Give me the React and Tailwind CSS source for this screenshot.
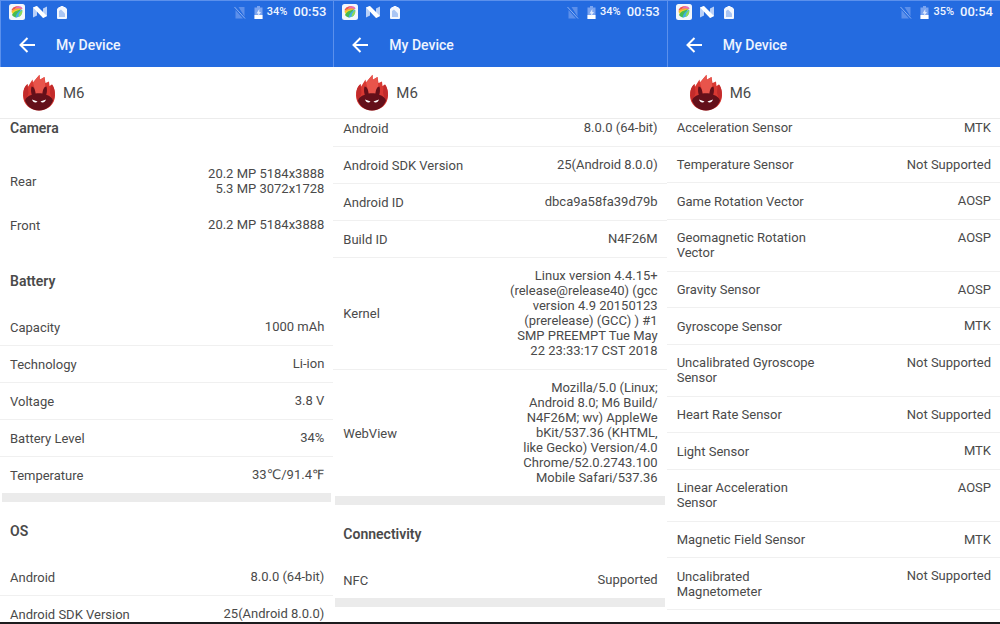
import React from 'react';

const kernel = `Linux version 4.4.15+
(release@release40) (gcc
version 4.9 20150123
(prerelease) (GCC) ) #1
SMP PREEMPT Tue May
22 23:33:17 CST 2018`;

const webView = `Mozilla/5.0 (Linux;
Android 8.0; M6 Build/
N4F26M; wv) AppleWe
bKit/537.36 (KHTML,
like Gecko) Version/4.0
Chrome/52.0.2743.100
Mobile Safari/537.36`;

const screens = [
    {
        id: 'battery',
        battery: '34%',
        time: '00:53',
        cutOff: true,
        sections: [
            {
                title: 'Camera',
                plain: true,
                rows: [
                    ['Rear', '20.2 MP 5184x3888\n5.3 MP 3072x1728'],
                    ['Front', '20.2 MP 5184x3888'],
                ],
            },
            {
                title: 'Battery',
                rows: [
                    ['Capacity', '1000 mAh'],
                    ['Technology', 'Li-ion'],
                    ['Voltage', '3.8 V'],
                    ['Battery Level', '34%'],
                    ['Temperature', '33℃/91.4℉'],
                ],
            },
            {
                title: 'OS',
                rows: [
                    ['Android', '8.0.0 (64-bit)'],
                    ['Android SDK Version', '25(Android 8.0.0)'],
                ],
            },
        ],
    },
    {
        id: 'os',
        battery: '34%',
        time: '00:53',
        sections: [
            {
                rows: [
                    ['Android', '8.0.0 (64-bit)'],
                    ['Android SDK Version', '25(Android 8.0.0)'],
                    ['Android ID', 'dbca9a58fa39d79b'],
                    ['Build ID', 'N4F26M'],
                    ['Kernel', kernel],
                    ['WebView', webView],
                ],
            },
            {
                title: 'Connectivity',
                rows: [['NFC', 'Supported']],
            },
        ],
    },
    {
        id: 'sensors',
        battery: '35%',
        time: '00:54',
        sections: [
            {
                open: true,
                rows: [
                    ['Acceleration Sensor', 'MTK'],
                    ['Temperature Sensor', 'Not Supported'],
                    ['Game Rotation Vector', 'AOSP'],
                    ['Geomagnetic Rotation Vector', 'AOSP'],
                    ['Gravity Sensor', 'AOSP'],
                    ['Gyroscope Sensor', 'MTK'],
                    ['Uncalibrated Gyroscope Sensor', 'Not Supported'],
                    ['Heart Rate Sensor', 'Not Supported'],
                    ['Light Sensor', 'MTK'],
                    ['Linear Acceleration Sensor', 'AOSP'],
                    ['Magnetic Field Sensor', 'MTK'],
                    ['Uncalibrated Magnetometer', 'Not Supported'],
                ],
            },
        ],
    },
];

function GalleryIcon() {
    return (
        <svg viewBox="0 0 16 16" className="size-4" aria-hidden="true">
            <rect width="16" height="16" rx="2.5" fill="#f4f7fb" />
            <path d="M2.500 6.500C3 3 7.500 1.500 10.500 2.500L8 5z" fill="#f0524a" />
            <path d="M6 4.500C8 2 11 1.500 13 3.500L13.500 5 7 6.500z" fill="#e86fb8" />
            <path d="M2.500 7.500C4 4.500 9 3.500 13 5L4 9z" fill="#f7a234" />
            <path d="M2.500 8C5 6 9 5.500 12 5.500L4.500 11z" fill="#f6d32e" />
            <path d="M3 11c1-3 5-5 9-5.500L7.500 13.500C5.500 13.500 4 12.500 3 11z" fill="#46bb52" />
            <path d="M6.500 13.500C7 10 9.500 7 13 5.500c.8 3.500-1 8-6.500 8z" fill="#3fb0e4" />
            <path d="M9.500 13C9.500 10 11 7.500 13.300 6c.5 3-.8 6-3.800 7z" fill="#8edb5a" />
        </svg>
    );
}

function NougatIcon() {
    return (
        <svg viewBox="0 0 14 12" className="h-3 w-3.5" aria-hidden="true">
            <path d="M0 1.500L4 0v9.500L0 11.500z" fill="#b9d0f8" />
            <path d="M10 2.500L14 .5V10l-4 2z" fill="#b9d0f8" />
            <path d="M0 1.500L4 0l10 10-4 2z" fill="#fff" />
        </svg>
    );
}

function SimCardIcon() {
    return (
        <svg viewBox="0 0 10 13" className="h-[13px] w-2.5" aria-hidden="true">
            <path d="M2 1h1.500V0h3v1H8l2 2v9a1 1 0 01-1 1H1a1 1 0 01-1-1V3z" fill="#f2f6fe" />
            <path d="M2 5L4 3.500 8 7.500V11H2z" fill="#a9c5f4" />
        </svg>
    );
}

function NoSimIcon() {
    return (
        <svg viewBox="0 0 12 13" className="h-[13px] w-3" aria-hidden="true">
            <path d="M4.500 1H10.500v9.500zM1.500 4v8.500H9z" fill="#5c8fea" />
            <path d="M.5 1L11 12.500" stroke="#8fb2f1" strokeWidth="1" />
        </svg>
    );
}

function BatteryIcon() {
    return (
        <svg viewBox="0 0 9 13" className="h-[13px] w-[9px]" aria-hidden="true">
            <path d="M3 0h3v1.500h2.500V13H.5V1.500H3z" fill="#7ba4f0" />
            <path d="M.5 9h8v4h-8z" fill="#fff" />
            <path d="M5.300 3L2.500 7.500h1.700v2.500l2.800-4H5.300z" fill="#dce8fd" />
        </svg>
    );
}

function BackIcon() {
    return (
        <svg viewBox="0 0 16 16" className="size-4" fill="none" stroke="#fff" strokeWidth="2" aria-hidden="true">
            <path d="M8.500 1L1.500 8l7 7M1.500 8H16" />
        </svg>
    );
}

function AntutuLogo() {
    return (
        <svg viewBox="0 0 34 37" className="h-[37px] w-[34px]" aria-hidden="true">
            <path
                d="M17 36.500C8 36.500 1 30 1 21.500 1 16.500 2.500 12.500 5.500 10l.3 3L10.500 5.500l.5 3L17.500.8l.3 5L22.500 3l1 6L27 7.500l.5 4.500 2.500-1.500c2 3 3 6.500 3 11 0 8.500-7 15-16 15z"
                fill="#d93832"
            />
            <path d="M11 8.500L17.500.8l.3 5L22.500 3l.8 10L20 20h-6z" fill="#e8544b" />
            <path d="M5.500 10l1 9-3 9C.5 22 .2 14.500 5.500 10zM28.500 12l1.500-1.500c3.500 4.500 4 12 .5 17.500L28 19z" fill="#c32b2b" />
            <path
                d="M9.500 12.500c2.500 0 3.800 3.500 4 7 2.200-.4 4.800-.4 7 0 .2-3.500 1.500-7 4-7 .8 3 .5 6-.3 8.200 3.800 1.300 6.300 3.300 6.800 6-2.200 5.800-7.500 9.800-14 9.800S5.200 32.500 3 26.700c.5-2.700 3-4.700 6.800-6-.8-2.200-1.100-5.200-.3-8.200z"
                fill="#64101a"
            />
            <path d="M10 25.500l5.500 2c-1.300 1.700-4.500 1.500-5.500-2zM24 25.500l-5.500 2c1.300 1.700 4.500 1.500 5.500-2z" fill="#fff" />
        </svg>
    );
}

function StatusBar({ battery, time }) {
    return (
        <div className="flex h-[22px] items-center pl-2 pr-[7px]">
            <div className="flex items-center gap-2">
                <GalleryIcon />
                <NougatIcon />
                <span className="ml-0.5 flex">
                    <SimCardIcon />
                </span>
            </div>
            <div className="ml-auto flex items-center font-medium text-[#f0f5ff]">
                <NoSimIcon />
                <span className="ml-2 flex">
                    <BatteryIcon />
                </span>
                <span className="ml-1 text-[11px]">{battery}</span>
                <span className="ml-1.5 text-[13px]">{time}</span>
            </div>
        </div>
    );
}

function Row({ label, value, top, cut, line }) {
    return (
        <div
            className={`flex grow justify-between pl-2.5 pr-[9px] leading-[15px] ${top ? 'pt-px' : 'pt-2.5'} ${cut ? '' : 'pb-2.5'} ${line ? 'border-b border-[#f0f0f0]' : ''}`}
        >
            <dt className="max-w-[140px] self-center">{label}</dt>
            <dd className="whitespace-pre text-right">{value}</dd>
        </div>
    );
}

function DeviceScreen({ screen }) {
    const lastSection = screen.sections.length - 1;

    return (
        <article className="flex min-w-0 flex-col overflow-hidden">
            <header className="h-[67px] shrink-0 border-l border-t border-[#5b90ec] bg-[#246be0]">
                <StatusBar battery={screen.battery} time={screen.time} />
                <div className="flex h-11 items-center gap-[21px] pl-[18px]">
                    <button type="button" aria-label="Back">
                        <BackIcon />
                    </button>
                    <h1 className="text-sm font-medium text-[#eef4ff]">My Device</h1>
                </div>
            </header>
            <div className="flex h-[52px] shrink-0 items-center gap-[7px] border-b border-[#ececec] pl-[22px]">
                <AntutuLogo />
                <span className="pt-0.5 text-[15px]">M6</span>
            </div>
            <div className={`flex grow flex-col ${screen.cutOff ? '' : screen.id === 'os' ? 'pb-[15px]' : 'pb-3'}`}>
                {screen.sections.map((section, i) => (
                    <section key={i} className="contents">
                        {section.title && (
                            <h2 className={`px-2.5 pb-5 text-sm font-semibold leading-4 ${i === 0 ? 'pt-px' : 'pt-[21px]'}`}>
                                {section.title}
                            </h2>
                        )}
                        <dl className="contents">
                            {section.rows.map(([label, value], j) => (
                                <Row
                                    key={label}
                                    label={label}
                                    value={value}
                                    top={i === 0 && j === 0 && !section.title}
                                    cut={screen.cutOff && i === lastSection && j === section.rows.length - 1}
                                    line={!section.plain && (section.open || j < section.rows.length - 1)}
                                />
                            ))}
                        </dl>
                        {!section.open && !(screen.cutOff && i === lastSection) && (
                            <div className={`mx-0.5 h-[9px] shrink-0 ${section.plain ? '' : 'bg-[#ebebeb]'}`} />
                        )}
                    </section>
                ))}
            </div>
        </article>
    );
}

export default function App() {
    return (
        <main className="grid h-screen grid-cols-3 overflow-hidden border-b-2 border-[#1c1c1e] bg-white font-['Roboto','DejaVu_Sans','Noto_Sans_CJK_SC',sans-serif] text-[13px] text-[#4a4a4a]">
            {screens.map(screen => (
                <DeviceScreen key={screen.id} screen={screen} />
            ))}
        </main>
    );
}
